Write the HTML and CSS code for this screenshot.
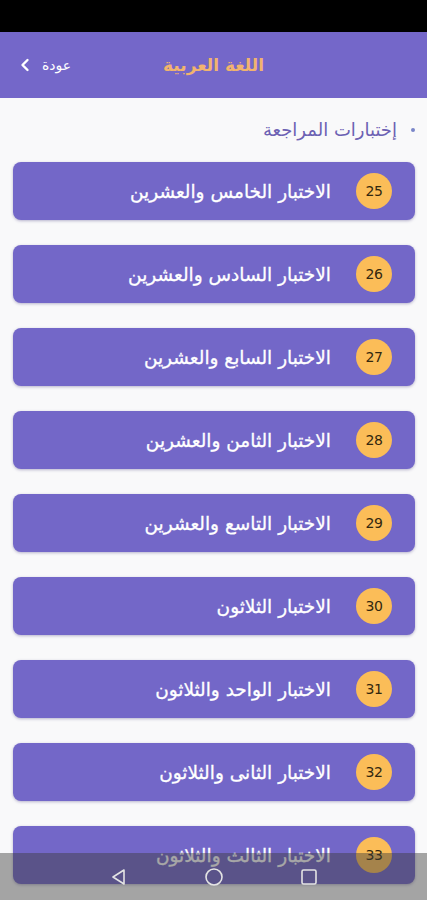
FILE: index.html
```html
<!DOCTYPE html>
<html lang="ar">
<head>
    <meta charset="UTF-8">
    <title>اللغة العربية</title>
    <link rel="stylesheet" href="styles.css">
</head>
<body>
    <div class="status-bar"></div>

    <header class="topbar">
        <a class="back" href="#">
            <svg width="10" height="14" viewBox="0 0 10 14"><path d="M7.5 2 L2.5 7 L7.5 12" fill="none" stroke="#fff" stroke-width="2.4" stroke-linecap="round" stroke-linejoin="round"/></svg>
            <span>عودة</span>
        </a>
        <h1 class="title">اللغة العربية</h1>
    </header>

    <main class="content" dir="rtl">
        <h2 class="section"><span class="dot"></span>إختبارات المراجعة</h2>

        <ul class="tests">
            <li class="test"><span class="num">25</span><span class="name">الاختبار الخامس والعشرين</span></li>
            <li class="test"><span class="num">26</span><span class="name">الاختبار السادس والعشرين</span></li>
            <li class="test"><span class="num">27</span><span class="name">الاختبار السابع والعشرين</span></li>
            <li class="test"><span class="num">28</span><span class="name">الاختبار الثامن والعشرين</span></li>
            <li class="test"><span class="num">29</span><span class="name">الاختبار التاسع والعشرين</span></li>
            <li class="test"><span class="num">30</span><span class="name">الاختبار الثلاثون</span></li>
            <li class="test"><span class="num">31</span><span class="name">الاختبار الواحد والثلاثون</span></li>
            <li class="test"><span class="num">32</span><span class="name">الاختبار الثانى والثلاثون</span></li>
            <li class="test"><span class="num">33</span><span class="name">الاختبار الثالث والثلاثون</span></li>
        </ul>
    </main>

    <nav class="nav-bar">
        <svg width="20" height="20" viewBox="0 0 20 20"><path d="M15 3 L4 10 L15 17 Z" fill="none" stroke="#e4e4e4" stroke-width="1.6" stroke-linejoin="round"/></svg>
        <svg width="20" height="20" viewBox="0 0 20 20"><circle cx="10" cy="10" r="8" fill="none" stroke="#e4e4e4" stroke-width="1.6"/></svg>
        <svg width="20" height="20" viewBox="0 0 20 20"><rect x="3" y="3" width="14" height="14" rx="1.5" fill="none" stroke="#e4e4e4" stroke-width="1.6"/></svg>
    </nav>
</body>
</html>
```

FILE: styles.css
```css
body {
    margin: 0;
    font-family: "DejaVu Sans", "Noto Sans", sans-serif;
    background: #f9f9fa;
    height: 900px;
    overflow: hidden;
}
.status-bar {
    height: 32px;
    background: #000;
}
.topbar {
    height: 66px;
    background: #7467c9;
    display: flex;
    align-items: center;
    justify-content: center;
    position: relative;
}
.back {
    position: absolute;
    left: 20px;
    top: 25px;
    display: flex;
    align-items: center;
    gap: 12px;
    color: #fff;
    text-decoration: none;
    font-size: 14px;
}
.title {
    margin: 0;
    font-size: 17px;
    font-weight: bold;
    color: #f1b46e;
}
.content {
    padding: 0 12px;
}
.section {
    margin: 0;
    padding: 20px 0 0 0;
    height: 43px;
    box-sizing: border-box;
    display: flex;
    align-items: center;
    gap: 14px;
    font-size: 18px;
    font-weight: normal;
    color: #6c61b3;
}
.dot {
    width: 4px;
    height: 4px;
    border-radius: 50%;
    background: #7a86c8;
}
.tests {
    list-style: none;
    margin: 0;
    padding: 21px 0 0;
    display: flex;
    flex-direction: column;
    gap: 25px;
}
.test {
    height: 58px;
    margin-left: 1px;
    background: #7367c8;
    border-radius: 8px;
    box-shadow: 0 1px 3px rgba(60, 50, 120, 0.35);
    display: flex;
    align-items: center;
    gap: 25px;
    padding: 0 23px 0 0;
}
.num {
    width: 36px;
    height: 36px;
    border-radius: 50%;
    background: #fbbd58;
    color: #33280f;
    font-size: 14px;
    display: flex;
    align-items: center;
    justify-content: center;
    letter-spacing: -0.5px;
}
.name {
    color: #fff;
    font-size: 18.5px;
    font-weight: normal;
    -webkit-text-stroke: 0.3px #fff;
}
.nav-bar {
    position: fixed;
    left: 0;
    right: 0;
    bottom: 0;
    height: 47px;
    background: rgba(60, 60, 60, 0.45);
    display: flex;
    justify-content: center;
    align-items: center;
    gap: 75px;
}
```
